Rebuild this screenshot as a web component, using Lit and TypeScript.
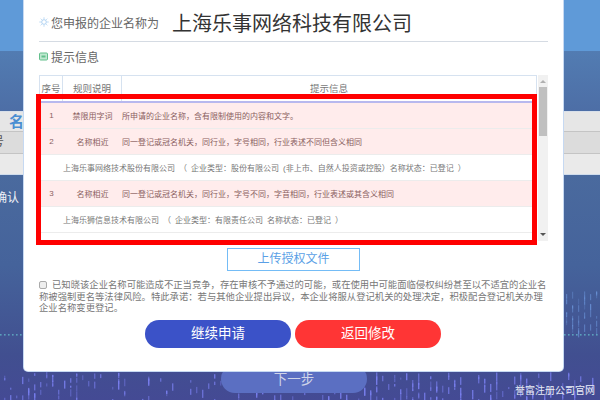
import { LitElement, html, css, svg } from "lit";
import { customElement } from "lit/decorators.js";

const dots = (() => {
  const out: any[] = [];
  let seed = 7;
  const r = () => (seed = (seed * 16807) % 2147483647) / 2147483647;
  for (let i = 0; i < 230; i++) {
    const x = 4 + Math.floor(r() * 99) * 6;
    const y = 372 + r() * 28;
    const h = 2 + r() * 7;
    out.push(svg`<rect x=${x} y=${y} width="1.4" height=${h} fill="#7a80f0" opacity=${0.35 + r() * 0.55}></rect>`);
  }
  for (let i = 0; i < 40; i++) {
    const x = 566 + Math.floor(r() * 6) * 6;
    const y = 290 + r() * 42;
    const h = 2 + r() * 6;
    out.push(svg`<rect x=${x} y=${y} width="1.2" height=${h} fill="#6f9ae0" opacity=${0.2 + r() * 0.4}></rect>`);
  }
  for (let x = 0; x < 600; x += 4) {
    out.push(svg`<rect x=${x} y="334" width="1.6" height="1.6" fill="#62b4c8" opacity="0.8"></rect>`);
  }
  return out;
})();

@customElement("app-root")
export class AppRoot extends LitElement {
  static styles = css`
    :host {
      display: block;
      width: 600px;
      height: 400px;
      position: relative;
      overflow: hidden;
      font-family: "Liberation Sans", "Noto Sans CJK SC", sans-serif;
    }
    .page { width: 600px; height: 400px; display: flex; flex-direction: column; overflow: hidden; }
    .b1 { height: 51px; background: #5f9ad8; flex: none; }
    .b2 { height: 60px; background: linear-gradient(180deg, #527cb2, #4d6ea6); flex: none; }
    .tab { height: 20px; background: #e6e6e6; flex: none; color: #4a8ed2; font-size: 15px; font-weight: 700; padding-left: 9px; line-height: 19px; box-sizing: border-box; border-top: 1px solid #d8e0ea; }
    .b3 { height: 23px; background: #dcdcdc; flex: none; border-top: 1px solid #c4c4c4; border-bottom: 1px solid #c4c4c4; box-sizing: border-box; font-size: 12px; line-height: 21px; color: #555; }
    .b3 span { margin-left: -8px; }
    .b4 { height: 21px; background: #eaeaea; flex: none; border-bottom: 1px solid #cfdcec; box-sizing: border-box; }
    .b5 { flex: 1; background: linear-gradient(180deg, #4a6a9e 0%, #45639b 40%, #414f90 80%, #444a94 100%); color: #eef1f8; font-size: 12px; padding-top: 15px; line-height: 16px; }
    .b5 span { margin-left: -5px; display: block; }
    .deco { position: absolute; inset: 0; pointer-events: none; }
    .next { position: absolute; left: 221px; top: 365px; width: 146px; height: 28px; border-radius: 14px; background: #5b6fc2; color: #cfd4e8; font-size: 13.5px; text-align: center; line-height: 30px; }
    .site { position: absolute; right: 5px; top: 384px; color: #e8ecf6; font-size: 10px; line-height: 14px; }

    .modal { position: absolute; left: 24px; top: 0; width: 539px; height: 371px; background: #fff; border-radius: 0 0 4px 4px; padding: 0 15px; box-sizing: border-box; display: flex; flex-direction: column; box-shadow: 0 0 0 1px #c6d9f2; }
    .head { height: 42px; flex: none; box-sizing: border-box; display: flex; align-items: center; border-bottom: 1px solid #d5dbe3; padding-top: 3px; }
    .head svg { flex: none; margin-right: 2px; }
    .lead { font-size: 12px; color: #666; width: 108px; flex: none; white-space: nowrap; }
    .company { font-size: 20px; color: #333; margin-left: 13px; white-space: nowrap; }
    .tip { height: 28px; flex: none; display: flex; align-items: center; gap: 3px; font-size: 12px; color: #666; }
    .tablewrap { margin-top: 5px; height: 166px; display: flex; flex: none; gap: 1px; }
    .table { width: 498px; flex: none; border: 1px solid #d6e2f0; border-bottom: none; box-sizing: border-box; display: flex; flex-direction: column; overflow: hidden; }
    .thead { display: grid; grid-template-columns: 23px 59px 1fr; height: 25px; flex: none; font-size: 9.5px; color: #777; line-height: 26px; text-align: center; border-bottom: 2px solid #b8b8ee; }
    .thead > div { border-right: 1px solid #d6e2f0; height: 25px; overflow: hidden; }
    .thead > div:last-child { border-right: none; }
    .row { height: 26px; box-sizing: border-box; border-bottom: 1px solid #ececec; font-size: 8px; color: #8a5f5f; display: flex; align-items: center; flex: none; white-space: nowrap; word-spacing: 1.8px; }
    .row.pink { background: #ffecec; }
    .row.white { background: #fff; color: #777; padding-left: 23px; }
    .no { width: 23px; text-align: center; flex: none; }
    .rule { width: 59px; text-align: center; flex: none; }
    .scroll { width: 10px; background: #f1f1f1; display: flex; flex-direction: column; align-items: center; position: relative; }
    .thumb { width: 8px; height: 49px; background: #c0c0c0; margin-top: 12px; }
    .arrow-up { width: 0; height: 0; border: 3px solid transparent; border-bottom: 3px solid #b0b0b0; border-top: none; position: absolute; top: 5px; }
    .arrow-down { width: 0; height: 0; border: 3px solid transparent; border-top: 3px solid #555; border-bottom: none; position: absolute; bottom: 5px; }
    .redbox { position: absolute; left: 36px; top: 94px; width: 501px; height: 151px; border: 5px solid #ff0000; box-sizing: border-box; }
    .upload { align-self: center; width: 133px; height: 23px; margin-top: 7px; border: 1px solid #74bcf6; box-sizing: border-box; color: #5a9fe6; font-size: 12px; line-height: 21px; text-align: center; flex: none; }
    .notice { margin-top: 9px; font-size: 9.33px; line-height: 11.5px; color: #777; flex: none; }
    .cb { display: inline-block; width: 8px; height: 8px; box-sizing: border-box; border: 1px solid #aaa; border-radius: 2px; background: #eee; margin-right: 5px; vertical-align: -1px; }
    .btns { display: flex; gap: 4px; margin: 5px 0 0 106px; flex: none; }
    .btn { width: 146px; height: 28px; border-radius: 14px; color: #fff; font-size: 13.5px; line-height: 28px; text-align: center; }
    .blue { background: #3b52c8; }
    .red { background: #ff3535; }
  `;

  render() {
    return html`
      <div class="page">
        <div class="b1"></div>
        <div class="b2"></div>
        <div class="tab">名称</div>
        <div class="b3"><span>号</span></div>
        <div class="b4"></div>
        <div class="b5"><span>确认</span></div>
      </div>
      <svg class="deco" width="600" height="400" viewBox="0 0 600 400">${dots}</svg>
      <div class="next">下一步</div>
      <div class="site">誉富注册公司官网</div>
      <div class="modal">
        <div class="head">
          <svg width="10" height="10" viewBox="0 0 12 12" fill="none" stroke="#9cc8ee" stroke-width="1">
            <circle cx="6" cy="6" r="2.8"></circle>
            <path d="M6 .5v1.6M6 9.9v1.6M.5 6h1.6M9.9 6h1.6M2.1 2.1l1.1 1.1M8.8 8.8l1.1 1.1M9.9 2.1 8.8 3.2M3.2 8.8 2.1 9.9"></path>
          </svg>
          <span class="lead">您申报的企业名称为</span>
          <span class="company">上海乐事网络科技有限公司</span>
        </div>
        <div class="tip">
          <svg width="9" height="9" viewBox="0 0 9 9">
            <rect x="0.5" y="1" width="8" height="7" rx="1" fill="#bfe8d0" stroke="#63bf8c"></rect>
            <rect x="2.5" y="3.5" width="4" height="2" fill="#63bf8c"></rect>
          </svg>
          <span>提示信息</span>
        </div>
        <div class="tablewrap">
          <div class="table">
            <div class="thead"><div>序号</div><div>规则说明</div><div>提示信息</div></div>
            <div class="row pink"><span class="no">1</span><span class="rule">禁限用字词</span><span>所申请的企业名称，含有限制使用的内容和文字。</span></div>
            <div class="row pink"><span class="no">2</span><span class="rule">名称相近</span><span>同一登记或冠名机关，同行业，字号相同，行业表述不同但含义相同</span></div>
            <div class="row white">上海乐事网络技术股份有限公司 （ 企业类型：股份有限公司 (非上市、自然人投资或控股）名称状态：已登记 ）</div>
            <div class="row pink"><span class="no">3</span><span class="rule">名称相近</span><span>同一登记或冠名机关，同行业，字号不同，字音相同，行业表述或其含义相同</span></div>
            <div class="row white">上海乐狮信息技术有限公司 （ 企业类型：有限责任公司 名称状态：已登记 ）</div>
          </div>
          <div class="scroll"><i class="arrow-up"></i><div class="thumb"></div><i class="arrow-down"></i></div>
        </div>
        <div class="upload">上传授权文件</div>
        <div class="notice"><span class="cb"></span>已知晓该企业名称可能造成不正当竞争，存在审核不予通过的可能，或在使用中可能面临侵权纠纷甚至以不适宜的企业名称被强制更名等法律风险。特此承诺：若与其他企业提出异议，本企业将服从登记机关的处理决定，积极配合登记机关办理企业名称变更登记。</div>
        <div class="btns"><div class="btn blue">继续申请</div><div class="btn red">返回修改</div></div>
      </div>
      <div class="redbox"></div>
    `;
  }
}
